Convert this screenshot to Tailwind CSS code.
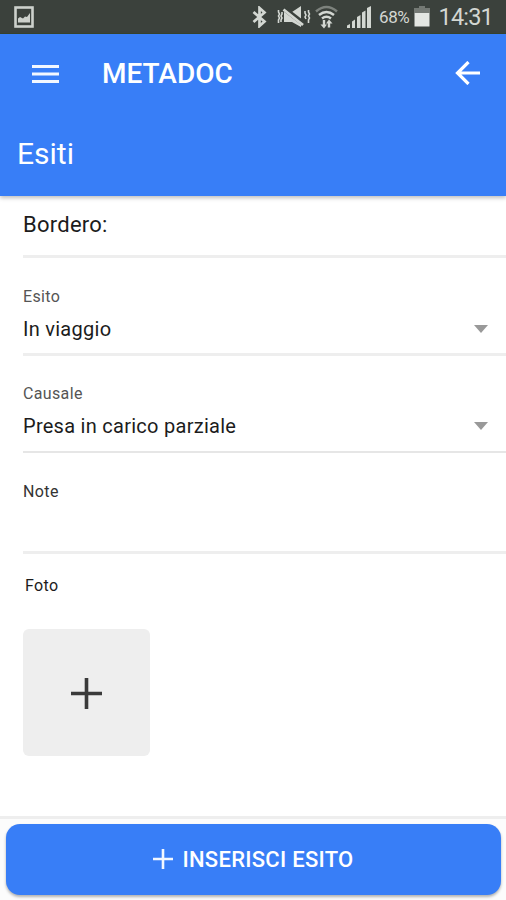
<!DOCTYPE html>
<html lang="it">
<head>
<meta charset="utf-8">
<title>METADOC</title>
<script src="https://cdn.jsdelivr.net/npm/@tailwindcss/browser@4"></script>
</head>
<body class="w-[506px] h-[900px] overflow-hidden bg-white font-['Roboto',sans-serif] flex flex-col text-[#1c1c1c]">
  <div class="h-[34px] shrink-0 bg-[#3b413c] border-b border-[#37432f] flex items-center pl-[14px] pr-[13px] text-[#d3d7d2]">
    <svg class="w-5 h-[22px]" viewBox="0 0 20 22" fill="none"><rect x="1.500" y="1.500" width="17" height="19" stroke="#cdd1cc" stroke-width="2.600"/><path d="M4 16.500v-4l2-1.500 3 1.500 2-2 2 .5 3-4v9.500z" fill="#cdd1cc"/></svg>
    <svg class="w-[15px] h-[22px] ml-[218px]" viewBox="0 0 15 22" fill="none" stroke="currentColor" stroke-width="2.700"><path d="M1.500 6l11 9.500-5 4.500V2l5 4.500-11 9.500"/></svg>
    <svg class="w-[34px] h-[22px] ml-[10px]" viewBox="0 0 34 22" fill="none" stroke="currentColor"><path d="M7 6h8l9-6v21l-9-5H7z" fill="currentColor" stroke="none"/><path d="M7 2.500l20 15.500" stroke="#3b413c" stroke-width="5"/><path d="M6.500 3.500l19.500 15.500" stroke-width="2.800"/><path d="M1.500 4v2l1 2-1 2 1 2-1 2v3M5 6v2l-1 2 1 2-1 2v2M28 5v2l1 2-1 2 1 2M31.500 4v2l1 2-1 2 1 2-1 2v3" stroke-width="1.600"/></svg>
    <svg class="w-[23px] h-[24px] ml-1" viewBox="0 0 23 24" fill="none" stroke="currentColor" stroke-width="2.500"><path d="M1 6.500q10.500-9 21 0" stroke="#7d827d"/><path d="M4 10q7.500-6 15 0M7 13.500q4.500-3.500 9 0"/><path d="M9 15v6M14 16.500v6" stroke-width="2.400"/><path d="M5.500 19.500L9 23.500l3-4zM11 18.500h6.500L14 14.500z" fill="currentColor" stroke="none"/></svg>
    <svg class="w-[24px] h-[22px] ml-[9px]" viewBox="0 0 24 22" fill="currentColor"><path d="M0 19.500l3-1.500v4H0zM5 15.500l3-2v8.500H5zM10 11l3.500-2v13H10zM15 6.500l3.500-2V22H15zM20 2l4-2v22h-4z"/></svg>
    <span class="w-[32px] ml-2 mt-[2px] text-[17px] leading-none tracking-[-0.400px] whitespace-nowrap">68%</span>
    <svg class="w-4 h-[21px] ml-[3px]" viewBox="0 0 16 21"><path d="M5 0h6v2h5v5H0V2h5z" fill="#747974"/><path d="M.5 7h15v13.500H.5z" fill="#e3e6e2"/></svg>
    <span class="ml-auto mt-[2px] text-[23.500px] leading-none tracking-[-0.800px] whitespace-nowrap">14:31</span>
  </div>
  <header class="h-[162px] shrink-0 bg-[#387ef7] text-white shadow-[0_2px_4px_rgba(0,0,0,0.25)]">
    <div class="h-[78px] flex items-center pl-8 pr-[26px]">
      <svg class="w-[27px] h-[18px] mt-[2px]" viewBox="0 0 27 18" fill="#f2f7ff"><path d="M0 0h27v3H0zM0 7.500h27v3H0zM0 15h27v3H0z"/></svg>
      <h1 class="ml-[43px] mt-[2px] text-[28px] leading-none font-medium">METADOC</h1>
      <svg class="w-[25px] h-6 ml-auto" viewBox="0 0 25 24" fill="none" stroke="white" stroke-width="3.200"><path d="M13.500 1L2.500 12l11 11M2.500 12H25"/></svg>
    </div>
    <h2 class="h-[83px] flex items-center pl-[17px] text-[30px] font-normal">Esiti</h2>
  </header>
  <main class="pl-[23px] flex-1">
    <div class="h-[62px] border-b-3 border-[#eee] text-[22px] leading-[58px] tracking-[0.250px]">Bordero:</div>
    <div class="h-[98px] border-b-3 border-[#eee] pt-[28px] flex flex-col">
      <label class="text-[16px] leading-[22px] tracking-[0.350px] text-[#555]">Esito</label>
      <div class="flex items-center justify-between pr-[18px] mt-[6px] text-[20px] leading-[30px] tracking-[0.270px]"><span>In viaggio</span><svg class="w-[14px] h-[8px]" viewBox="0 0 14 8"><path d="M0 0h14L7 8z" fill="#999"/></svg></div>
    </div>
    <div class="h-[97px] border-b-2 border-[#e6e6e6] pt-[27px] flex flex-col">
      <label class="text-[16px] leading-[22px] tracking-[0.350px] text-[#555]">Causale</label>
      <div class="flex items-center justify-between pr-[18px] mt-[6px] text-[20px] leading-[30px] tracking-[0.270px]"><span>Presa in carico parziale</span><svg class="w-[14px] h-[8px]" viewBox="0 0 14 8"><path d="M0 0h14L7 8z" fill="#999"/></svg></div>
    </div>
    <div class="h-[101px] border-b-3 border-[#eee] pt-[28px] text-[16px] leading-[22px] tracking-[0.400px] text-[#333]">Note</div>
    <div class="pl-[2px] pt-[21px] text-[16px] leading-[22px] tracking-[0.400px]">Foto</div>
    <button class="mt-[32px] w-[127px] h-[127px] rounded-[6px] bg-[#eee] flex items-center justify-center">
      <svg class="w-[31px] h-[31px] mt-[2px]" viewBox="0 0 31 31"><path d="M13.700 0h3.600v13.700H31v3.600H17.300V31h-3.600V17.300H0v-3.600h13.700z" fill="#3a3a3a"/></svg>
    </button>
  </main>
  <footer class="h-[84px] shrink-0 border-t-3 border-[#eee] bg-[#fcfcfc] pl-[6px] pr-[5px] pt-[5px]">
    <button class="w-full h-[70.500px] rounded-[14px] bg-[#387ef7] text-white shadow-[0_2px_3px_rgba(0,0,0,0.3)] flex items-center justify-center gap-[9px] text-[22px] tracking-[0.270px] font-medium leading-none">
      <svg class="w-5 h-5" viewBox="0 0 20 20"><path d="M8.700 0h2.600v8.700H20v2.600h-8.700V20H8.700v-8.700H0V8.700h8.700z" fill="#f2f7ff"/></svg>
      <span class="whitespace-nowrap mt-[1px]">INSERISCI ESITO</span>
    </button>
  </footer>
</body>
</html>
